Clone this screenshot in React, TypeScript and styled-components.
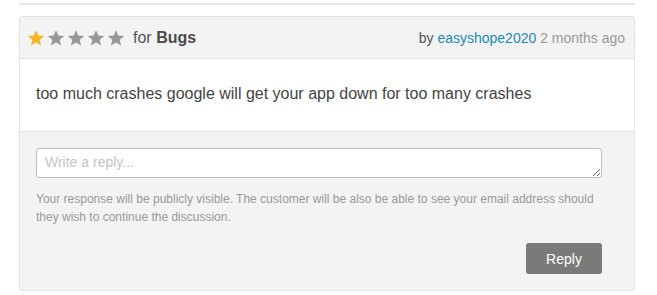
import React from "react";
import styled, { createGlobalStyle } from "styled-components";

const Global = createGlobalStyle`
  html, body { margin: 0; padding: 0; background: #fff; }
  body { font-family: "Liberation Sans", Arial, sans-serif; }
`;

const Page = styled.div`
  padding: 3px 22px 0 19px;
  width: 616px;
`;

const Rule = styled.div`
  height: 0;
  border-top: 2px solid #e6e9ec;
  margin-bottom: 11px;
`;

const Card = styled.div`
  border: 1px solid #dde3e9;
  border-radius: 3px;
  background: #f3f3f3;
  overflow: hidden;
`;

const Header = styled.div`
  display: flex;
  align-items: center;
  justify-content: space-between;
  height: 41px;
  padding: 0 9px 0 7px;
  border-bottom: 1px solid #dde3e9;
  background: #f3f3f3;
`;

const Left = styled.div`
  display: flex;
  align-items: center;
`;

const Stars = styled.div`
  display: flex;
  gap: 2px;
  margin-right: 8px;
`;

const ForText = styled.span`
  font-size: 16px;
  color: #555;
  b { color: #4a4a4a; font-weight: bold; }
`;

const Meta = styled.div`
  font-size: 14px;
  color: #555;
`;

const Link = styled.a`
  color: #1a8bb8;
  text-decoration: none;
`;

const Muted = styled.span`
  color: #999;
`;

const Body = styled.div`
  background: #fff;
  padding: 25px 16px 27px;
  font-size: 16px;
  line-height: 20px;
  color: #444;
  border-bottom: 1px solid #dde3e9;
`;

const Footer = styled.div`
  padding: 16px 32px 16px 16px;
`;

const TextArea = styled.textarea`
  display: block;
  box-sizing: border-box;
  width: 566px;
  height: 30px;
  border: 1px solid #bdbdbd;
  border-radius: 3px;
  padding: 5px 8px;
  font-family: "Liberation Sans", Arial, sans-serif;
  font-size: 14px;
  color: #444;
  &::placeholder { color: #c4c4c4; }
`;

const Help = styled.p`
  margin: 12px 0 0;
  font-size: 12px;
  line-height: 18px;
  color: #999;
`;

const Actions = styled.div`
  display: flex;
  justify-content: flex-end;
  margin-top: 17px;
  width: 566px;
`;

const Button = styled.button`
  width: 76px;
  height: 31px;
  border: none;
  border-radius: 3px;
  background: #7a7a7a;
  color: #fff;
  font-family: "Liberation Sans", Arial, sans-serif;
  font-size: 14px;
`;

const Star = ({ on }: { on: boolean }) => (
  <svg width="18" height="18" viewBox="0 0 24 24">
    <path
      d="M12 1.5l3.1 7.2 7.8.6-5.9 5.1 1.8 7.6L12 18l-6.8 4 1.8-7.6-5.9-5.1 7.8-.6z"
      fill={on ? "#f5b52a" : "#999"}
    />
  </svg>
);

export default function App() {
  return (
    <>
      <Global />
      <Page>
        <Rule />
        <Card>
          <Header>
            <Left>
              <Stars>
                {[0, 1, 2, 3, 4].map((i) => (
                  <Star key={i} on={i === 0} />
                ))}
              </Stars>
              <ForText>
                for <b>Bugs</b>
              </ForText>
            </Left>
            <Meta>
              by <Link href="#">easyshope2020</Link> <Muted>2 months ago</Muted>
            </Meta>
          </Header>
          <Body>too much crashes google will get your app down for too many crashes</Body>
          <Footer>
            <TextArea placeholder="Write a reply..." />
            <Help>
              Your response will be publicly visible. The customer will be also be able to see your email address should
              they wish to continue the discussion.
            </Help>
            <Actions>
              <Button>Reply</Button>
            </Actions>
          </Footer>
        </Card>
      </Page>
    </>
  );
}
